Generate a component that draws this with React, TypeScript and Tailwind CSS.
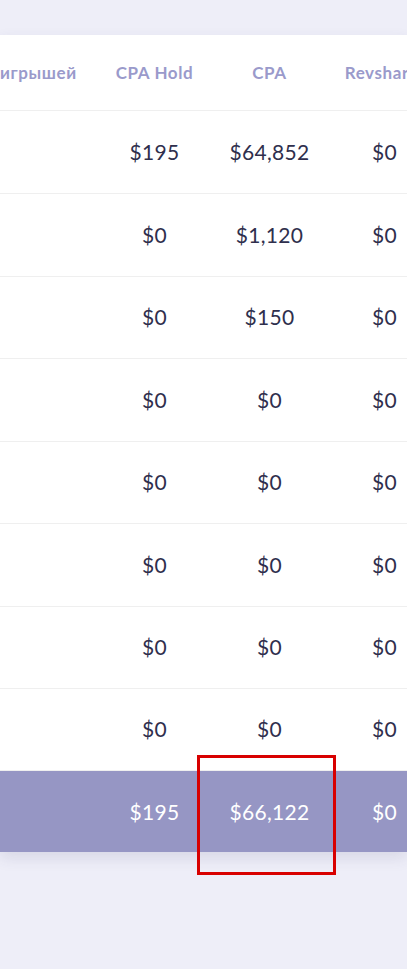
import React from "react";

const rows = [
  { hold: "$195", cpa: "$64,852", rev: "$0", h: "h-[83px]" },
  { hold: "$0", cpa: "$1,120", rev: "$0", h: "h-[83px]" },
  { hold: "$0", cpa: "$150", rev: "$0", h: "h-[82px]" },
  { hold: "$0", cpa: "$0", rev: "$0", h: "h-[83px]" },
  { hold: "$0", cpa: "$0", rev: "$0", h: "h-[82px]" },
  { hold: "$0", cpa: "$0", rev: "$0", h: "h-[83px]" },
  { hold: "$0", cpa: "$0", rev: "$0", h: "h-[82px]" },
  { hold: "$0", cpa: "$0", rev: "$0", h: "h-[82px]" },
];

export default function App() {
  return (
    <div className="relative min-h-screen bg-[#eeeef8] pt-[35px] font-['Lato','Open_Sans',sans-serif]">
      <div className="overflow-hidden bg-white shadow-[0_6px_14px_rgba(60,60,110,0.12)]">
        <table className="-ml-[83px] w-[525px] max-w-none table-fixed border-collapse text-center">
          <colgroup>
            <col className="w-[180px]" />
            <col className="w-[115px]" />
            <col className="w-[115px]" />
            <col className="w-[115px]" />
          </colgroup>
          <thead>
            <tr className="h-[75px] border-b border-[#efefef] text-[17px] font-bold tracking-[0.6px] text-[#9a9acb]">
              <th className="whitespace-nowrap pr-[26px] font-bold">Сумма выигрышей</th>
              <th className="whitespace-nowrap font-bold">CPA Hold</th>
              <th className="whitespace-nowrap font-bold">CPA</th>
              <th className="whitespace-nowrap pr-[6px] font-bold">Revshare</th>
            </tr>
          </thead>
          <tbody className="text-[21px] tracking-[0.3px] text-[#2f2f4d]">
            {rows.map((r, i) => (
              <tr key={i} className={`${r.h} border-b border-[#efefef] last:border-b-0`}>
                <td></td>
                <td>{r.hold}</td>
                <td>{r.cpa}</td>
                <td>{r.rev}</td>
              </tr>
            ))}
            <tr className="h-[82px] bg-[#9696c4] text-white">
              <td></td>
              <td>$195</td>
              <td>$66,122</td>
              <td>$0</td>
            </tr>
          </tbody>
        </table>
      </div>

      {/* выделение итоговой ячейки */}
      <div className="absolute left-[197px] top-[755px] h-[120px] w-[139px] border-[3px] border-[#d80000]" />
    </div>
  );
}
